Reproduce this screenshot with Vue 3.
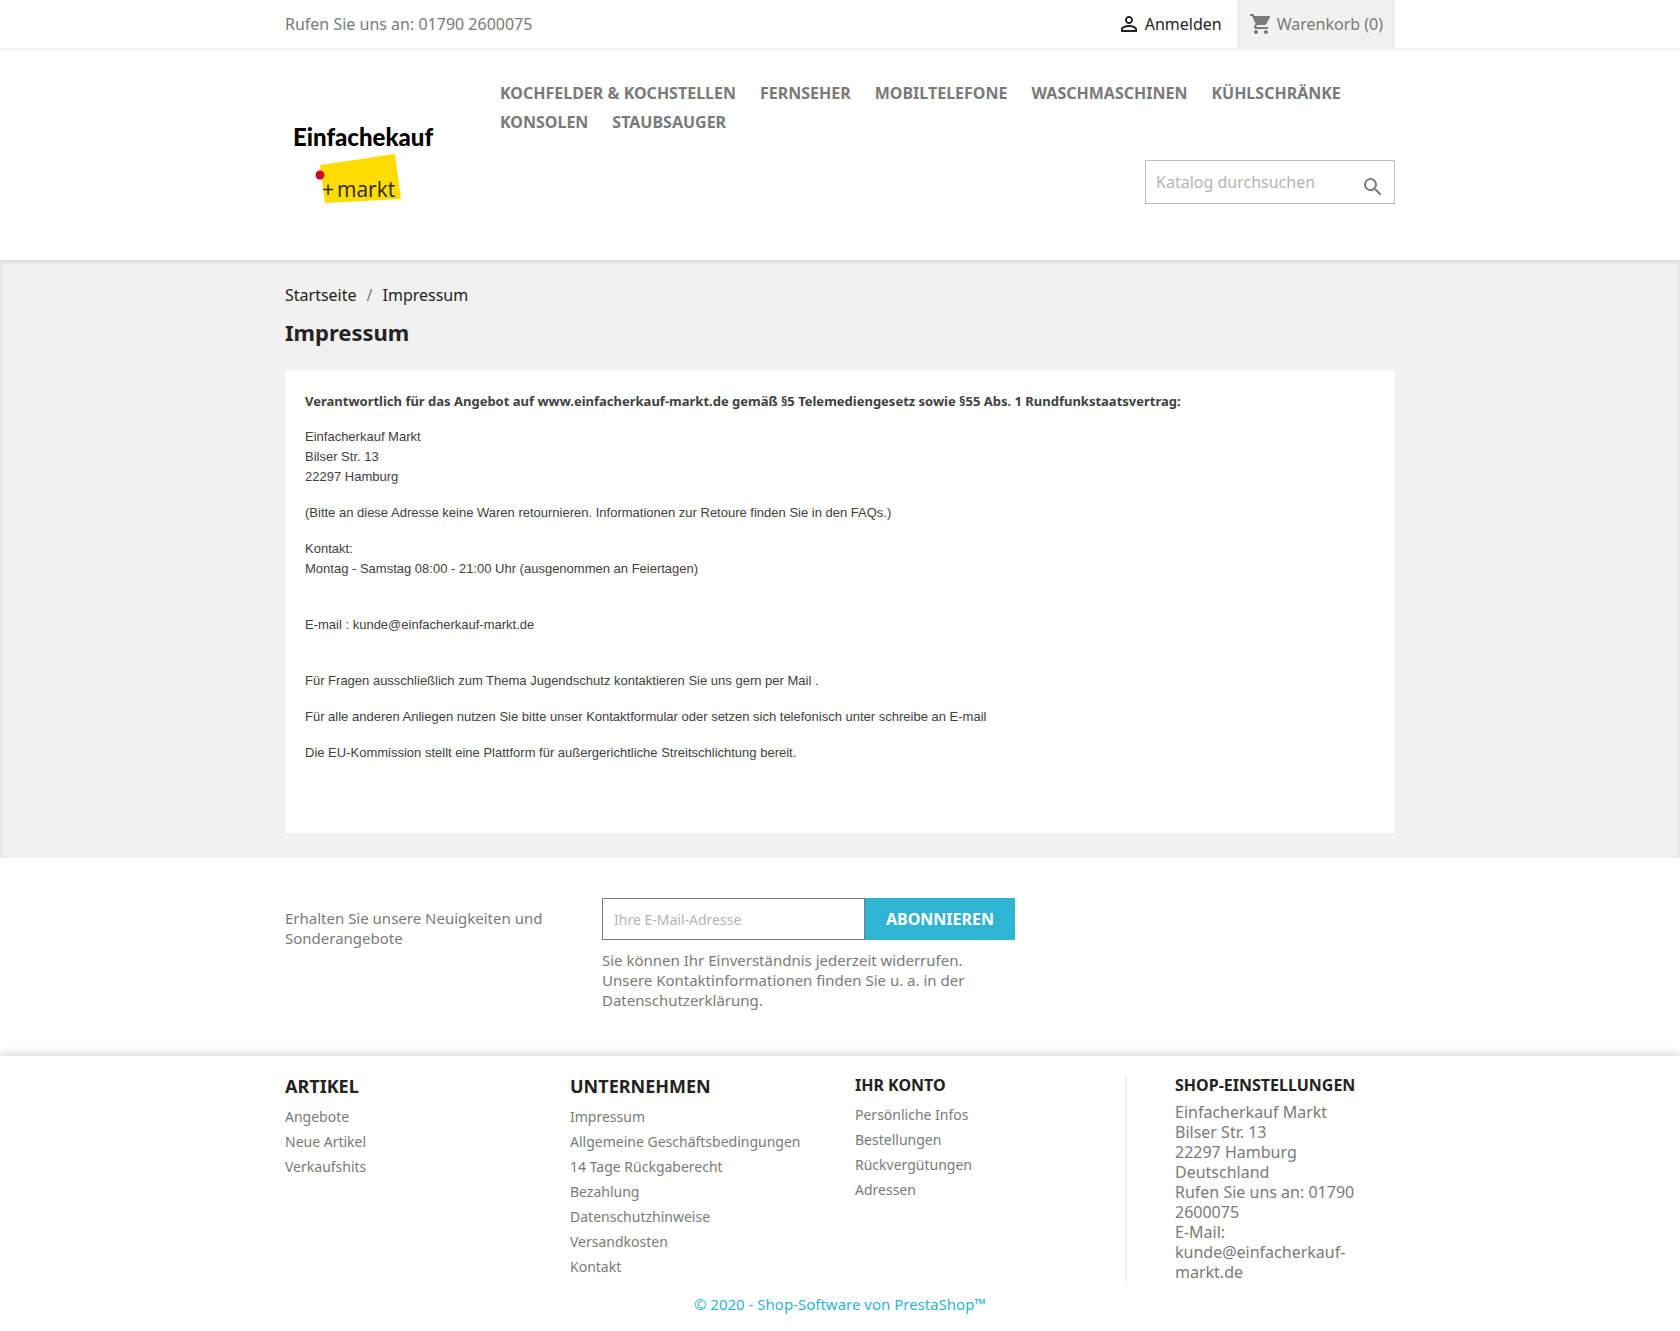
<template>
  <div class="page">
    <header>
      <nav class="topbar">
        <div class="container topbar-row">
          <div class="contact">Rufen Sie uns an: 01790 2600075</div>
          <div class="user-area">
            <a href="#" class="login">
              <svg class="icon" viewBox="0 0 24 24" aria-hidden="true">
                <path d="M12 5.900c1.160 0 2.100.94 2.100 2.100s-.94 2.100-2.100 2.100S9.900 9.160 9.900 8s.94-2.100 2.100-2.100m0 9c2.970 0 6.100 1.460 6.100 2.100v1.100H5.900V17c0-.64 3.130-2.100 6.100-2.100M12 4C9.790 4 8 5.790 8 8s1.790 4 4 4 4-1.790 4-4-1.790-4-4-4zm0 9c-2.670 0-8 1.340-8 4v3h16v-3c0-2.660-5.330-4-8-4z" />
              </svg>
              <span>Anmelden</span>
            </a>
            <div class="cart">
              <svg class="icon" viewBox="0 0 24 24" aria-hidden="true">
                <path d="M7 18c-1.100 0-1.990.9-1.990 2S5.900 22 7 22s2-.9 2-2-.9-2-2-2zM1 2v2h2l3.600 7.590-1.350 2.450c-.16.28-.25.61-.25.96 0 1.100.9 2 2 2h12v-2H7.420c-.14 0-.25-.11-.25-.25l.03-.12.9-1.630h7.450c.75 0 1.410-.41 1.750-1.030l3.580-6.490A1.003 1.003 0 0 0 20 4H5.210l-.94-2H1zm16 16c-1.100 0-1.990.9-1.990 2s.89 2 1.990 2 2-.9 2-2-.9-2-2-2z" />
              </svg>
              <span>Warenkorb (0)</span>
            </div>
          </div>
        </div>
      </nav>

      <div class="container header-main">
        <a href="#" class="logo" aria-label="Einfachekauf + markt">
          <svg viewBox="0 0 160 110">
            <text x="8" y="36" class="logo-name">Einfachekauf</text>
            <polygon points="35,55 110,44 116,89 40,93" fill="#ffdc00" />
            <circle cx="35" cy="65" r="4.500" fill="#cc0a14" />
            <text x="37" y="87" class="logo-plus">+</text>
            <text x="52" y="87" class="logo-markt">markt</text>
          </svg>
        </a>
        <div class="header-right">
          <ul class="menu">
            <li v-for="item in menu" :key="item"><a href="#">{{ item }}</a></li>
          </ul>
          <form class="search" @submit.prevent>
            <input v-model="query" type="text" placeholder="Katalog durchsuchen" aria-label="Suche" />
            <button type="submit" aria-label="Suchen">
              <svg class="icon" viewBox="0 0 24 24" aria-hidden="true">
                <path d="M15.500 14h-.79l-.28-.27A6.471 6.471 0 0 0 16 9.500 6.500 6.500 0 1 0 9.500 16c1.610 0 3.090-.59 4.230-1.570l.27.28v.79l5 4.990L20.490 19l-4.990-5zm-6 0C7.010 14 5 11.990 5 9.500S7.010 5 9.500 5 14 7.010 14 9.500 11.990 14 9.500 14z" />
              </svg>
            </button>
          </form>
        </div>
      </div>
    </header>

    <section class="wrapper">
      <div class="container">
        <nav class="breadcrumb">
          <a href="#">Startseite</a>
          <span class="slash">/</span>
          <a href="#">Impressum</a>
        </nav>
        <h1>Impressum</h1>
        <article class="card">
          <p class="lead">Verantwortlich für das Angebot auf www.einfacherkauf-markt.de gemäß §5 Telemediengesetz sowie §55 Abs. 1 Rundfunkstaatsvertrag:</p>
          <p>Einfacherkauf Markt<br />Bilser Str. 13<br />22297 Hamburg</p>
          <p>(Bitte an diese Adresse keine Waren retournieren. Informationen zur Retoure finden Sie in den FAQs.)</p>
          <p>Kontakt:<br />Montag - Samstag 08:00 - 21:00 Uhr (ausgenommen an Feiertagen)</p>
          <p><br />E-mail : kunde@einfacherkauf-markt.de</p>
          <p><br />Für Fragen ausschließlich zum Thema Jugendschutz kontaktieren Sie uns gern per Mail .</p>
          <p>Für alle anderen Anliegen nutzen Sie bitte unser Kontaktformular oder setzen sich telefonisch unter schreibe an E-mail</p>
          <p>Die EU-Kommission stellt eine Plattform für außergerichtliche Streitschlichtung bereit.</p>
        </article>
      </div>
    </section>

    <footer>
      <div class="newsletter">
        <div class="container newsletter-row">
          <label for="newsletter-email">Erhalten Sie unsere Neuigkeiten und Sonderangebote</label>
          <form @submit.prevent>
            <div class="subscribe">
              <input id="newsletter-email" v-model="email" type="email" placeholder="Ihre E-Mail-Adresse" />
              <button type="submit">ABONNIEREN</button>
            </div>
            <p>Sie können Ihr Einverständnis jederzeit widerrufen. Unsere Kontaktinformationen finden Sie u. a. in der Datenschutzerklärung.</p>
          </form>
        </div>
      </div>

      <div class="footer-main">
        <div class="container footer-row">
          <div v-for="col in columns" :key="col.title" class="links">
            <h3 :class="{ small: col.small }">{{ col.title }}</h3>
            <ul>
              <li v-for="link in col.links" :key="link"><a href="#">{{ link }}</a></li>
            </ul>
          </div>
          <div class="store">
            <h3 class="small">SHOP-EINSTELLUNGEN</h3>
            <address>
              Einfacherkauf Markt<br />
              Bilser Str. 13<br />
              22297 Hamburg<br />
              Deutschland<br />
              Rufen Sie uns an: 01790 2600075<br />
              E-Mail: kunde@einfacherkauf-markt.de
            </address>
          </div>
        </div>
        <p class="copyright"><a href="#">© 2020 - Shop-Software von PrestaShop™</a></p>
      </div>
    </footer>
  </div>
</template>

<script setup>
import { ref } from 'vue'

const query = ref('')
const email = ref('')

const menu = [
  'KOCHFELDER & KOCHSTELLEN',
  'FERNSEHER',
  'MOBILTELEFONE',
  'WASCHMASCHINEN',
  'KÜHLSCHRÄNKE',
  'KONSOLEN',
  'STAUBSAUGER'
]

const columns = [
  {
    title: 'ARTIKEL',
    links: ['Angebote', 'Neue Artikel', 'Verkaufshits']
  },
  {
    title: 'UNTERNEHMEN',
    links: [
      'Impressum',
      'Allgemeine Geschäftsbedingungen',
      '14 Tage Rückgaberecht',
      'Bezahlung',
      'Datenschutzhinweise',
      'Versandkosten',
      'Kontakt'
    ]
  },
  {
    title: 'IHR KONTO',
    small: true,
    links: ['Persönliche Infos', 'Bestellungen', 'Rückvergütungen', 'Adressen']
  }
]
</script>

<style>
body {
  margin: 0;
  background: #fff;
}
</style>

<style scoped>
.page {
  font-family: "Noto Sans", sans-serif;
  font-size: 16px;
  line-height: 20px;
  color: #7a7a7a;
}
*,
*::before,
*::after {
  box-sizing: border-box;
}
a {
  color: inherit;
  text-decoration: none;
}
ul {
  list-style: none;
  margin: 0;
  padding: 0;
}
input,
button {
  font-family: inherit;
  border-radius: 0;
  margin: 0;
}
input::placeholder {
  color: #b4b4b4;
  opacity: 1;
}
.container {
  max-width: 1140px;
  margin: 0 auto;
  padding: 0 15px;
}
.icon {
  width: 24px;
  height: 24px;
  fill: currentColor;
}

/* top bar */
.topbar {
  border-bottom: 2px solid #f1f1f1;
}
.topbar-row,
.user-area,
.login,
.cart {
  display: flex;
  align-items: center;
}
.topbar-row {
  justify-content: space-between;
}
.user-area {
  gap: 15px;
}
.login,
.cart {
  gap: 4px;
}
.login {
  color: #232323;
}
.cart {
  height: 48px;
  padding: 0 12px;
  background: #f1f1f1;
}

/* logo, menu and search */
.header-main {
  display: flex;
  padding-top: 29px;
  padding-bottom: 40px;
}
.logo {
  flex: 0 0 160px;
  margin-top: 31px;
}
.logo svg {
  display: block;
  width: 160px;
  height: 110px;
}
.logo-name {
  font-family: Lato, sans-serif;
  font-weight: 900;
  font-size: 24px;
  fill: #000;
}
.logo-plus,
.logo-markt {
  font-family: "Open Sans", sans-serif;
  font-size: 21px;
  fill: #2e2708;
}
.header-right {
  flex: 1;
  padding-left: 55px;
}
.menu {
  display: flex;
  flex-wrap: wrap;
  column-gap: 24px;
  font-weight: 700;
  line-height: 29px;
}
.search {
  position: relative;
  width: 250px;
  margin: 23px 0 0 auto;
}
.search input {
  width: 100%;
  height: 44px;
  padding: 0 40px 0 10px;
  border: 1px solid #bdbdbd;
  font-size: 16px;
  color: #7a7a7a;
}
.search button {
  position: absolute;
  top: 15px;
  right: 10px;
  padding: 0;
  border: none;
  background: none;
  color: #7a7a7a;
  line-height: 0;
}

/* content */
.wrapper {
  padding: 25px 0;
  background: #f1f1f1;
  box-shadow: inset 0 2px 5px 0 rgba(0, 0, 0, 0.11);
}
.breadcrumb {
  display: flex;
  gap: 10px;
  color: #232323;
}
.slash {
  color: #7a7a7a;
}
h1 {
  margin: 15px 0 25px;
  font-size: 22px;
  line-height: 25px;
  font-weight: 700;
  color: #232323;
}
.card {
  padding: 21px 20px 70px;
  background: #fff;
  font-family: "Liberation Sans", Arial, sans-serif;
  font-size: 13px;
  color: #414141;
}
.card p {
  margin: 0 0 16px;
}
.card p:last-child {
  margin-bottom: 0;
}
.card .lead {
  font-family: "Noto Sans", sans-serif;
  font-weight: 700;
}

/* newsletter */
.newsletter {
  padding: 40px 0 46px;
}
.newsletter-row {
  display: flex;
  font-size: 15px;
}
.newsletter label {
  flex: 0 0 317px;
  padding: 10px 40px 0 0;
}
.newsletter form {
  flex: 0 1 413px;
}
.subscribe {
  display: flex;
  height: 42px;
}
.subscribe input {
  flex: 1;
  min-width: 0;
  padding: 0 11px;
  border: 1px solid #7a7a7a;
  font-size: 14px;
  color: #7a7a7a;
}
.subscribe button {
  width: 150px;
  padding: 0;
  border: none;
  background: #2fb5d2;
  color: #fff;
  font-size: 16px;
  font-weight: 700;
}
.newsletter p {
  margin: 10px 0 0;
  padding-right: 40px;
}

/* footer */
.footer-main {
  padding-top: 20px;
  box-shadow: 0 -2px 8px 0 rgba(0, 0, 0, 0.16);
}
.footer-row {
  display: flex;
}
.links {
  flex: 0 0 285px;
}
.links:nth-child(3) {
  flex-basis: 270px;
}
h3 {
  margin: 0 0 8px;
  font-size: 18px;
  line-height: 20px;
  font-weight: 700;
  color: #232323;
}
h3.small {
  font-size: 16px;
  line-height: 18px;
}
.links li {
  font-size: 14px;
  line-height: 25px;
}
.store {
  flex: 1;
  padding: 0 30px 0 48px;
  border-left: 2px solid #f1f1f1;
}
address {
  font-style: normal;
}
.copyright {
  margin: 12px 0 0;
  text-align: center;
  font-size: 15px;
  color: #2fb5d2;
}
</style>
